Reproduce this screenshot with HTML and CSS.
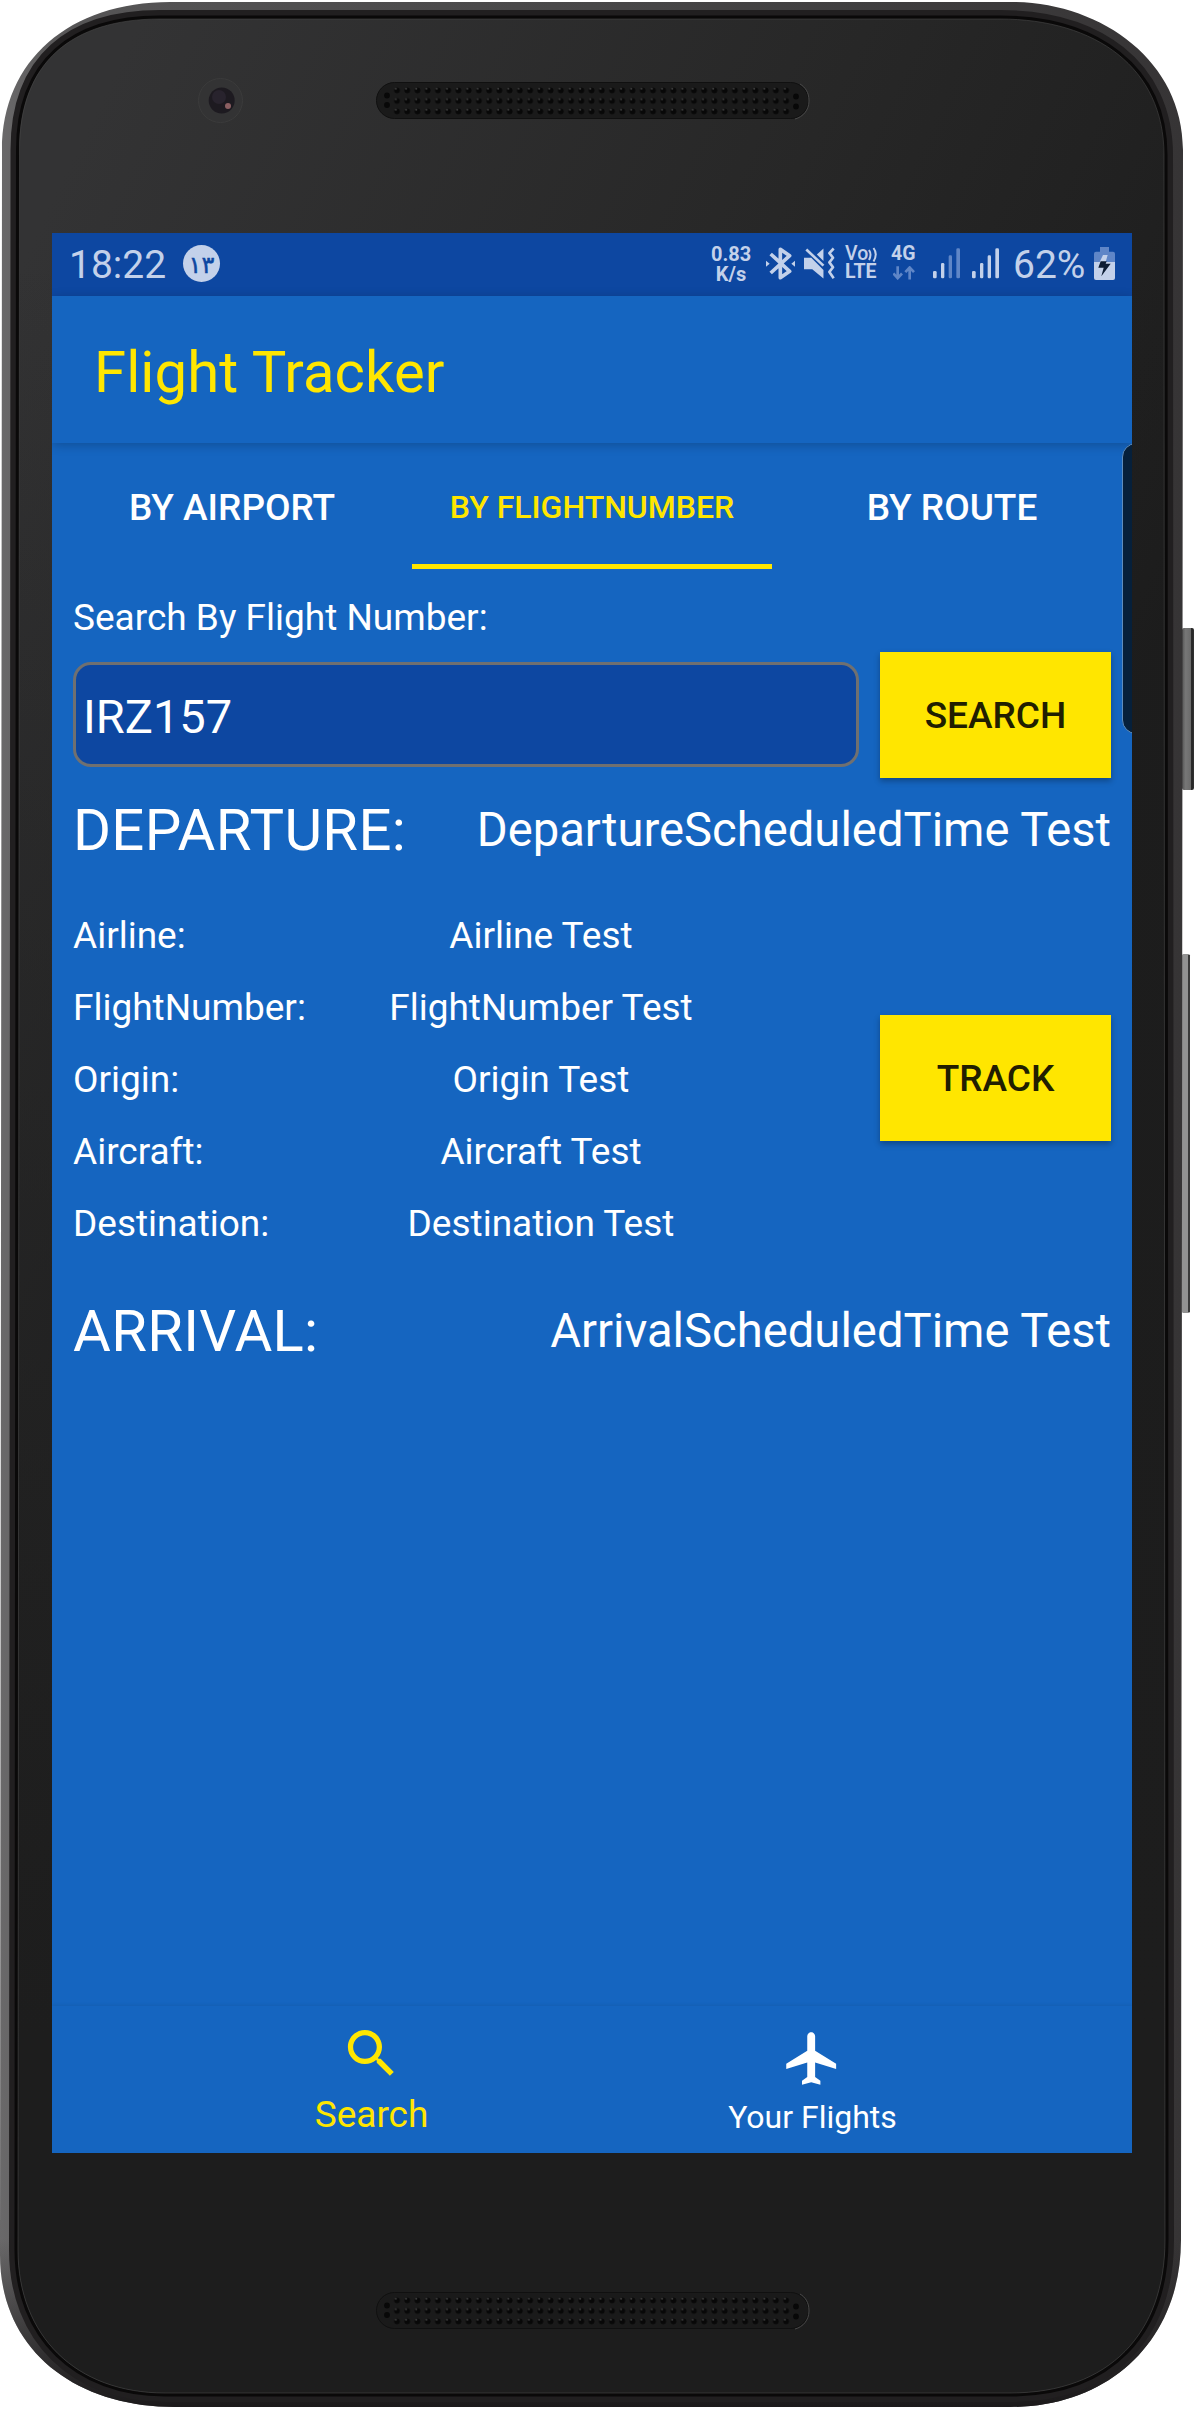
FILE: index.html
```html
<!DOCTYPE html>
<html lang="en">
<head>
<meta charset="utf-8">
<title>Flight Tracker</title>
<link rel="stylesheet" href="styles.css">
</head>
<body>
<div class="device">
  <svg class="shell" viewBox="0 0 1194 2409" aria-hidden="true">
    <defs>
      <linearGradient id="metal" x1="0" y1="0" x2="1" y2="0">
        <stop offset="0" stop-color="#6a696a"/><stop offset=".06" stop-color="#565556"/>
        <stop offset=".5" stop-color="#484748"/><stop offset="1" stop-color="#363435"/>
      </linearGradient>
      <linearGradient id="metalShade" x1="0" y1="0" x2="0" y2="1">
        <stop offset="0" stop-color="#222021" stop-opacity="0"/><stop offset=".93" stop-color="#222021" stop-opacity="0"/>
        <stop offset="1" stop-color="#1c1a1b"/>
      </linearGradient>
      <linearGradient id="glass" gradientUnits="userSpaceOnUse" x1="100" y1="100" x2="1180" y2="620">
        <stop offset="0" stop-color="#333334"/><stop offset=".55" stop-color="#272727"/><stop offset="1" stop-color="#1c1c1c"/>
      </linearGradient>
      <linearGradient id="glassShade" x1="0" y1="0" x2="0" y2="1">
        <stop offset=".1" stop-color="#1d1d1d" stop-opacity="0"/><stop offset=".85" stop-color="#1d1d1d"/>
      </linearGradient>
      <linearGradient id="key" x1="0" y1="0" x2="1" y2="0">
        <stop offset="0" stop-color="#555"/><stop offset=".3" stop-color="#777"/><stop offset=".72" stop-color="#6c6c6c"/>
        <stop offset=".8" stop-color="#222"/><stop offset="1" stop-color="#333"/>
      </linearGradient>
      <pattern id="holes" patternUnits="userSpaceOnUse" x="391.9" y="85.2" width="10.24" height="10.5">
        <circle cx="5.1" cy="5.2" r="2.9" fill="#080808"/><circle cx="3.9" cy="3.6" r="1" fill="#3c3c3c"/>
      </pattern>
      <g id="grille">
        <rect x="376.5" y="82.5" width="432" height="36" rx="18" fill="#1a1a1a" stroke="#101010"/>
        <path d="M795 119c8-2 14-9 14-18s-4-14-9-17" fill="none" stroke="#484848" stroke-width="1"/>
        <rect x="391.9" y="85.2" width="399.4" height="31.5" fill="url(#holes)"/>
        <g fill="#080808"><circle cx="387" cy="95.5" r="2.9"/><circle cx="387" cy="105" r="2.9"/><circle cx="796" cy="96.5" r="2.9"/><circle cx="796" cy="106.500" r="2.9"/></g>
      </g>
      <path id="body" d="M2 150C2 60 70 2 170 2H1011C1100 2 1183 60 1183 150L1181 2240C1181 2340 1110 2407 1010 2407H175C75 2407 0 2350 0 2255Z"/>
      <path id="face" d="M19.500 150C19.500 62 72 19 160 19H1000C1096 19 1164 68 1164 155L1165 2240C1165 2333 1110 2393 1010 2393H165C76 2393 18 2336 18 2250Z"/>
    </defs>
    <rect x="1182" y="628" width="12" height="162" rx="2" fill="url(#key)"/>
    <rect x="1182" y="954" width="8" height="359" rx="1.5" fill="#929292"/>
    <rect x="1188" y="955" width="2" height="357" fill="#3a3a3a"/>
    <use href="#body" fill="url(#metal)"/>
    <use href="#body" fill="url(#metalShade)"/>
    <use href="#face" fill="none" stroke="#211f20" stroke-width="18"/>
    <use href="#face" fill="none" stroke="#0a0909" stroke-width="7"/>
    <use href="#face" fill="url(#glass)"/>
    <use href="#face" fill="url(#glassShade)"/>
    <use href="#face" fill="none" stroke="#484848" stroke-width=".6"/>
    <circle cx="220.500" cy="100.500" r="22" fill="#333334" stroke="#3b3b3b"/>
    <circle cx="221.700" cy="100.500" r="13" fill="#1d1a20"/>
    <circle cx="219" cy="97" r="7" fill="#28232d"/>
    <circle cx="228" cy="106" r="3" fill="#8c5f62"/>
    <use href="#grille"/>
    <use href="#grille" y="2210"/>
  </svg>

  <div class="screen">
    <header class="status">
      <span class="clock">18:22</span>
      <span class="badge">١٣</span>
      <span class="net">0.83<br>K/s</span>
      <svg class="bt" viewBox="228 66 87 99" width="29" height="33"><g fill="none" stroke="#c3d1ea" stroke-width="11"><path d="M242 87L299 139L271 158V73L299 92L242 144" stroke-linejoin="round"/></g><path d="M228 107l11 9-11 9zM315 107l-11 9 11 9z" fill="#c3d1ea"/></svg>
      <svg class="mute" viewBox="343 66 94 99" width="31" height="33"><g fill="#c3d1ea"><path d="M343 98h22l37 37v26l-34-28h-25z"/><path d="M382 88l20-18v38z"/></g><g fill="none" stroke="#c3d1ea" stroke-width="8"><path d="M350 73l52 49"/><path d="M433 70l-13 14 11 14-11 14 11 15-11 14 13 19" stroke-linejoin="round"/></g></svg>
      <span class="volte"><span>Vo<svg viewBox="0 0 10 15" width="10" height="15"><path d="M1 3q3 4.500 0 10M5.500 1q4.500 6 0 13.500" fill="none" stroke="#c3d1ea" stroke-width="2"/></svg></span><span>LTE</span></span>
      <span class="gen"><span>4G</span><svg viewBox="612 124 66 41" width="22" height="14"><path d="M626 124v36M613 146l13 14 13-14M662 164v-36M649 142l13-14 13 14" fill="none" stroke="#5f86c7" stroke-width="8"/></svg></span>
      <svg class="sig1" viewBox="729 66 81 99" width="27" height="33"><g fill="#c3d1ea"><rect x="729" y="138" width="11" height="22" rx="4"/><rect x="753" y="114" width="10" height="46" rx="4"/></g><g fill="#5f86c7"><rect x="776" y="91" width="10" height="69" rx="4"/><rect x="799" y="70" width="11" height="90" rx="4"/></g></svg>
      <svg class="sig2" viewBox="846 66 81 99" width="27" height="33"><g fill="#c3d1ea"><rect x="846" y="138" width="11" height="22" rx="4"/><rect x="870" y="114" width="10" height="46" rx="4"/><rect x="893" y="91" width="10" height="69" rx="4"/><rect x="916" y="70" width="11" height="90" rx="4"/></g></svg>
      <span class="pct">62%</span>
      <svg class="batt" viewBox="1212 66 63 99" width="21" height="33"><path d="M1230 66h27v14h12q6 0 6 6v25h-63V86q0-6 6-6h12z" fill="#5f86c7"/><path d="M1212 111h63v48q0 6-6 6h-51q-6 0-6-6z" fill="#c3d1ea"/><path d="M1239 90h14l-6 21h-18z" fill="#c3d1ea"/><path d="M1232 109l-7 19h16l-7 26 28-38h-15l3-7z" fill="#0c1c34"/></svg>
    </header>
    <div class="appbar"><h1>Flight Tracker</h1></div>
    <nav class="tabs">
      <a>BY AIRPORT</a><a class="on">BY FLIGHTNUMBER</a><a>BY ROUTE</a>
    </nav>
    <main>
      <label class="hint">Search By Flight Number:</label>
      <div class="searchrow">
        <div class="field">IRZ157</div>
        <button class="btn">SEARCH</button>
      </div>
      <div class="leg"><h2>DEPARTURE:</h2><span>DepartureScheduledTime Test</span></div>
      <div class="info">
        <dl>
          <dt>Airline:</dt><dd>Airline Test</dd>
          <dt>FlightNumber:</dt><dd>FlightNumber Test</dd>
          <dt>Origin:</dt><dd>Origin Test</dd>
          <dt>Aircraft:</dt><dd>Aircraft Test</dd>
          <dt>Destination:</dt><dd>Destination Test</dd>
        </dl>
        <button class="btn">TRACK</button>
      </div>
      <div class="leg"><h2>ARRIVAL:</h2><span>ArrivalScheduledTime Test</span></div>
    </main>
    <nav class="bottom">
      <a class="active"><svg viewBox="0 0 24 24" width="63" height="63"><path fill="currentColor" d="M15.500 14h-.79l-.28-.27C15.410 12.590 16 11.110 16 9.500 16 5.910 13.090 3 9.500 3S3 5.910 3 9.500 5.910 16 9.500 16c1.610 0 3.090-.59 4.230-1.570l.27.28v.79l5 4.990L20.490 19l-4.990-5zm-6 0C7.010 14 5 11.990 5 9.500S7.010 5 9.500 5 14 7.010 14 9.500 11.990 14 9.500 14z"/></svg><span>Search</span></a>
      <a><svg viewBox="0 0 24 24" width="63" height="63"><path fill="currentColor" d="M21 16v-2l-8-5V3.500c0-.83-.67-1.500-1.500-1.500S10 2.670 10 3.500V9l-8 5v2l8-2.500V19l-2 1.500V22l3.500-1 3.500 1v-1.500L13 19v-5.500l8 2.500z"/></svg><span>Your Flights</span></a>
    </nav>
    <i class="edge"></i>
  </div>
</div>
</body>
</html>
```
FILE: styles.css
```css
* { box-sizing: border-box; }
body { margin: 0; background: #fff; font-family: Roboto, "Noto Sans", sans-serif; color: #fff; }
h1, h2, dl, dd { margin: 0; font-weight: 400; }

.device { display: grid; width: 1194px; height: 2409px; }
.shell { grid-area: 1 / 1; width: 1194px; height: 2409px; }
.screen {
  grid-area: 1 / 1; position: relative; overflow: hidden;
  width: 1080px; height: 1920px; margin: 233px 0 0 52px;
  display: flex; flex-direction: column; background: #1565c0;
}

/* status bar */
.status { display: flex; align-items: flex-start; height: 63px; flex: none; padding: 14px 17px 0 17px; background: #0d47a1; color: #c3d1ea; white-space: nowrap; }
.status > * { flex: none; display: block; }
.clock, .pct { font-size: 39px; line-height: 37px; }
.clock { width: 99px; }
.badge { width: 37px; height: 37px; margin: -2px auto 0 15px; border-radius: 50%; background: #c3d1ea; color: #0d47a1; font: 24px/40px "DejaVu Sans", sans-serif; -webkit-text-stroke: .5px #0d47a1; text-align: center; letter-spacing: -3px; }
.net { width: 40px; font-size: 20px; font-weight: 700; line-height: 20px; text-align: center; margin-top: -3px; }
.bt { margin-left: 15px; }
.mute { margin-left: 9px; }
.volte { width: 31px; margin: -2px 0 0 10px; font-size: 19.5px; font-weight: 500; line-height: 18px; }
.volte span, .gen span { display: block; height: 18px; }
.volte span + span { font-weight: 700; }
.volte svg { display: inline-block; vertical-align: -2px; }
.gen { width: 24px; margin: -2px 0 0 15px; font-size: 19.5px; font-weight: 700; line-height: 18px; }
.gen svg { display: block; margin: 3px 0 0 2px; }
.sig1 { margin-left: 18px; }
.sig2 { margin-left: 12px; }
.pct { width: 72px; margin-left: 14px; }
.batt { margin-left: 9px; }

.appbar { flex: none; height: 147px; padding: 0 42px; display: flex; align-items: center; box-shadow: 0 2px 10px rgba(0, 0, 0, .22); }
.appbar h1 { font-size: 58px; line-height: 72px; letter-spacing: .1px; color: #ffe600; padding-top: 5px; }

.tabs { flex: none; height: 126px; display: grid; grid-template-columns: repeat(3, 1fr); grid-template-rows: 126px; font-size: 37px; font-weight: 500; text-align: center; line-height: 130px; }
.tabs .on { font-size: 32px; line-height: 129px; color: #ffe600; border-bottom: 5px solid #ffe600; }

main { flex: 1; padding: 21px 21px 0; font-size: 37px; }
.hint { display: block; line-height: 55px; margin-bottom: 7px; }
.searchrow { display: flex; align-items: center; justify-content: space-between; height: 126px; }
.field { width: 786px; height: 105px; margin-top: -1px; padding-left: 7px; border: 3px solid #707070; border-radius: 18px; background: #0d47a1; font-size: 47px; line-height: 103px; }
.btn { width: 231px; height: 126px; border: 0; padding: 0; background: #ffe600; color: #211e00; font: 500 37px/128px Roboto, sans-serif; box-shadow: 0 3px 6px rgba(0, 0, 0, .3); }
.leg { display: flex; align-items: center; justify-content: space-between; height: 104px; }
.leg h2 { font-size: 58px; line-height: 104px; letter-spacing: .3px; }
.leg span { font-size: 47.2px; line-height: 104px; }
.info { display: flex; align-items: center; justify-content: space-between; margin: 17px 0 20px; }
dl { display: grid; grid-template-columns: 231px 474px; grid-auto-rows: 72px; line-height: 73px; }
dd { text-align: center; }
.info .btn { margin-top: -3px; }

.bottom { flex: none; height: 147px; display: flex; justify-content: center; box-shadow: 0 -1px 3px rgba(0, 0, 0, .08); }
.bottom a { width: 441px; display: flex; flex-direction: column; align-items: center; padding-top: 21px; font-size: 32px; }
.bottom span { line-height: 42px; margin-top: 6px; }
.bottom .active { color: #ffe600; font-size: 37px; padding-top: 16px; }
.bottom .active span { margin-top: 9px; }

/* side panel handle, hanging over the right edge of the screen */
.edge { position: absolute; right: -20px; top: 210px; width: 30px; height: 291px; border: 1px solid #5f8dbd; border-radius: 14px; background: #06203b; }
```
